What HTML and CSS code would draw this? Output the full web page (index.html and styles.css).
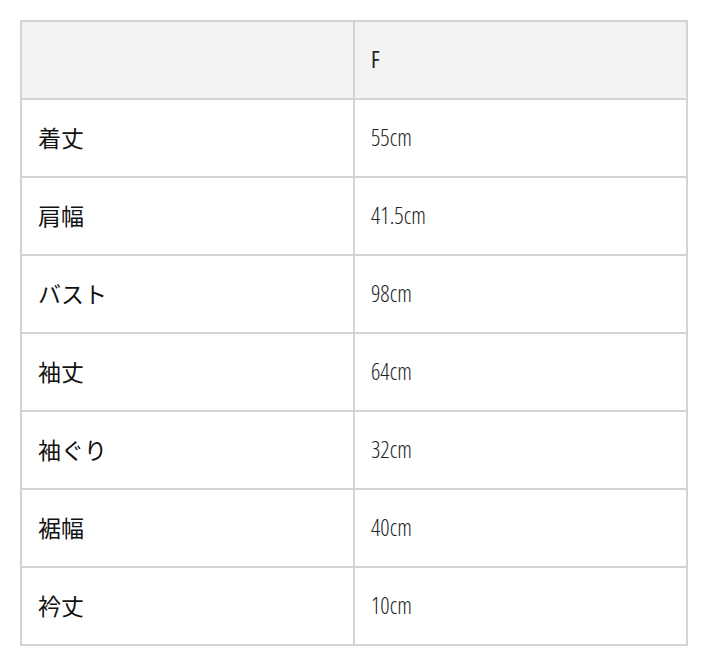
FILE: index.html
```html
<!DOCTYPE html>
<html lang="ja">
<head>
<meta charset="utf-8">
<link rel="stylesheet" href="styles.css">
</head>
<body>
<div class="wrap">
<table class="size-table">
  <tr class="head"><th></th><th class="val">F</th></tr>
  <tr><td class="label">着丈</td><td class="val">55cm</td></tr>
  <tr><td class="label">肩幅</td><td class="val">41.5cm</td></tr>
  <tr><td class="label">バスト</td><td class="val">98cm</td></tr>
  <tr><td class="label">袖丈</td><td class="val">64cm</td></tr>
  <tr><td class="label">袖ぐり</td><td class="val">32cm</td></tr>
  <tr><td class="label">裾幅</td><td class="val">40cm</td></tr>
  <tr><td class="label">衿丈</td><td class="val">10cm</td></tr>
</table>
</div>
</body>
</html>
```
FILE: styles.css
```css
html, body { margin: 0; padding: 0; background: #fff; }
.wrap { padding: 20px 25px 20px 20px; }
.size-table {
  width: 668px;
  border-collapse: collapse;
  table-layout: fixed;
}
.size-table th, .size-table td {
  border: 2px solid #d3d3d3;
  height: 74px;
  padding: 0 0 2px 16px;
  text-align: left;
  vertical-align: middle;
  box-sizing: content-box;
}
.size-table .head th { background: #f3f3f3; font-weight: normal; }
.label {
  font-family: "Noto Sans CJK JP", "Noto Sans", sans-serif;
  font-size: 23px;
  color: #111;
}
.val {
  font-family: "Open Sans", sans-serif;
  font-stretch: 75%;
  font-weight: 300;
  font-size: 23px;
  color: #222;
  letter-spacing: 0;
}
```
